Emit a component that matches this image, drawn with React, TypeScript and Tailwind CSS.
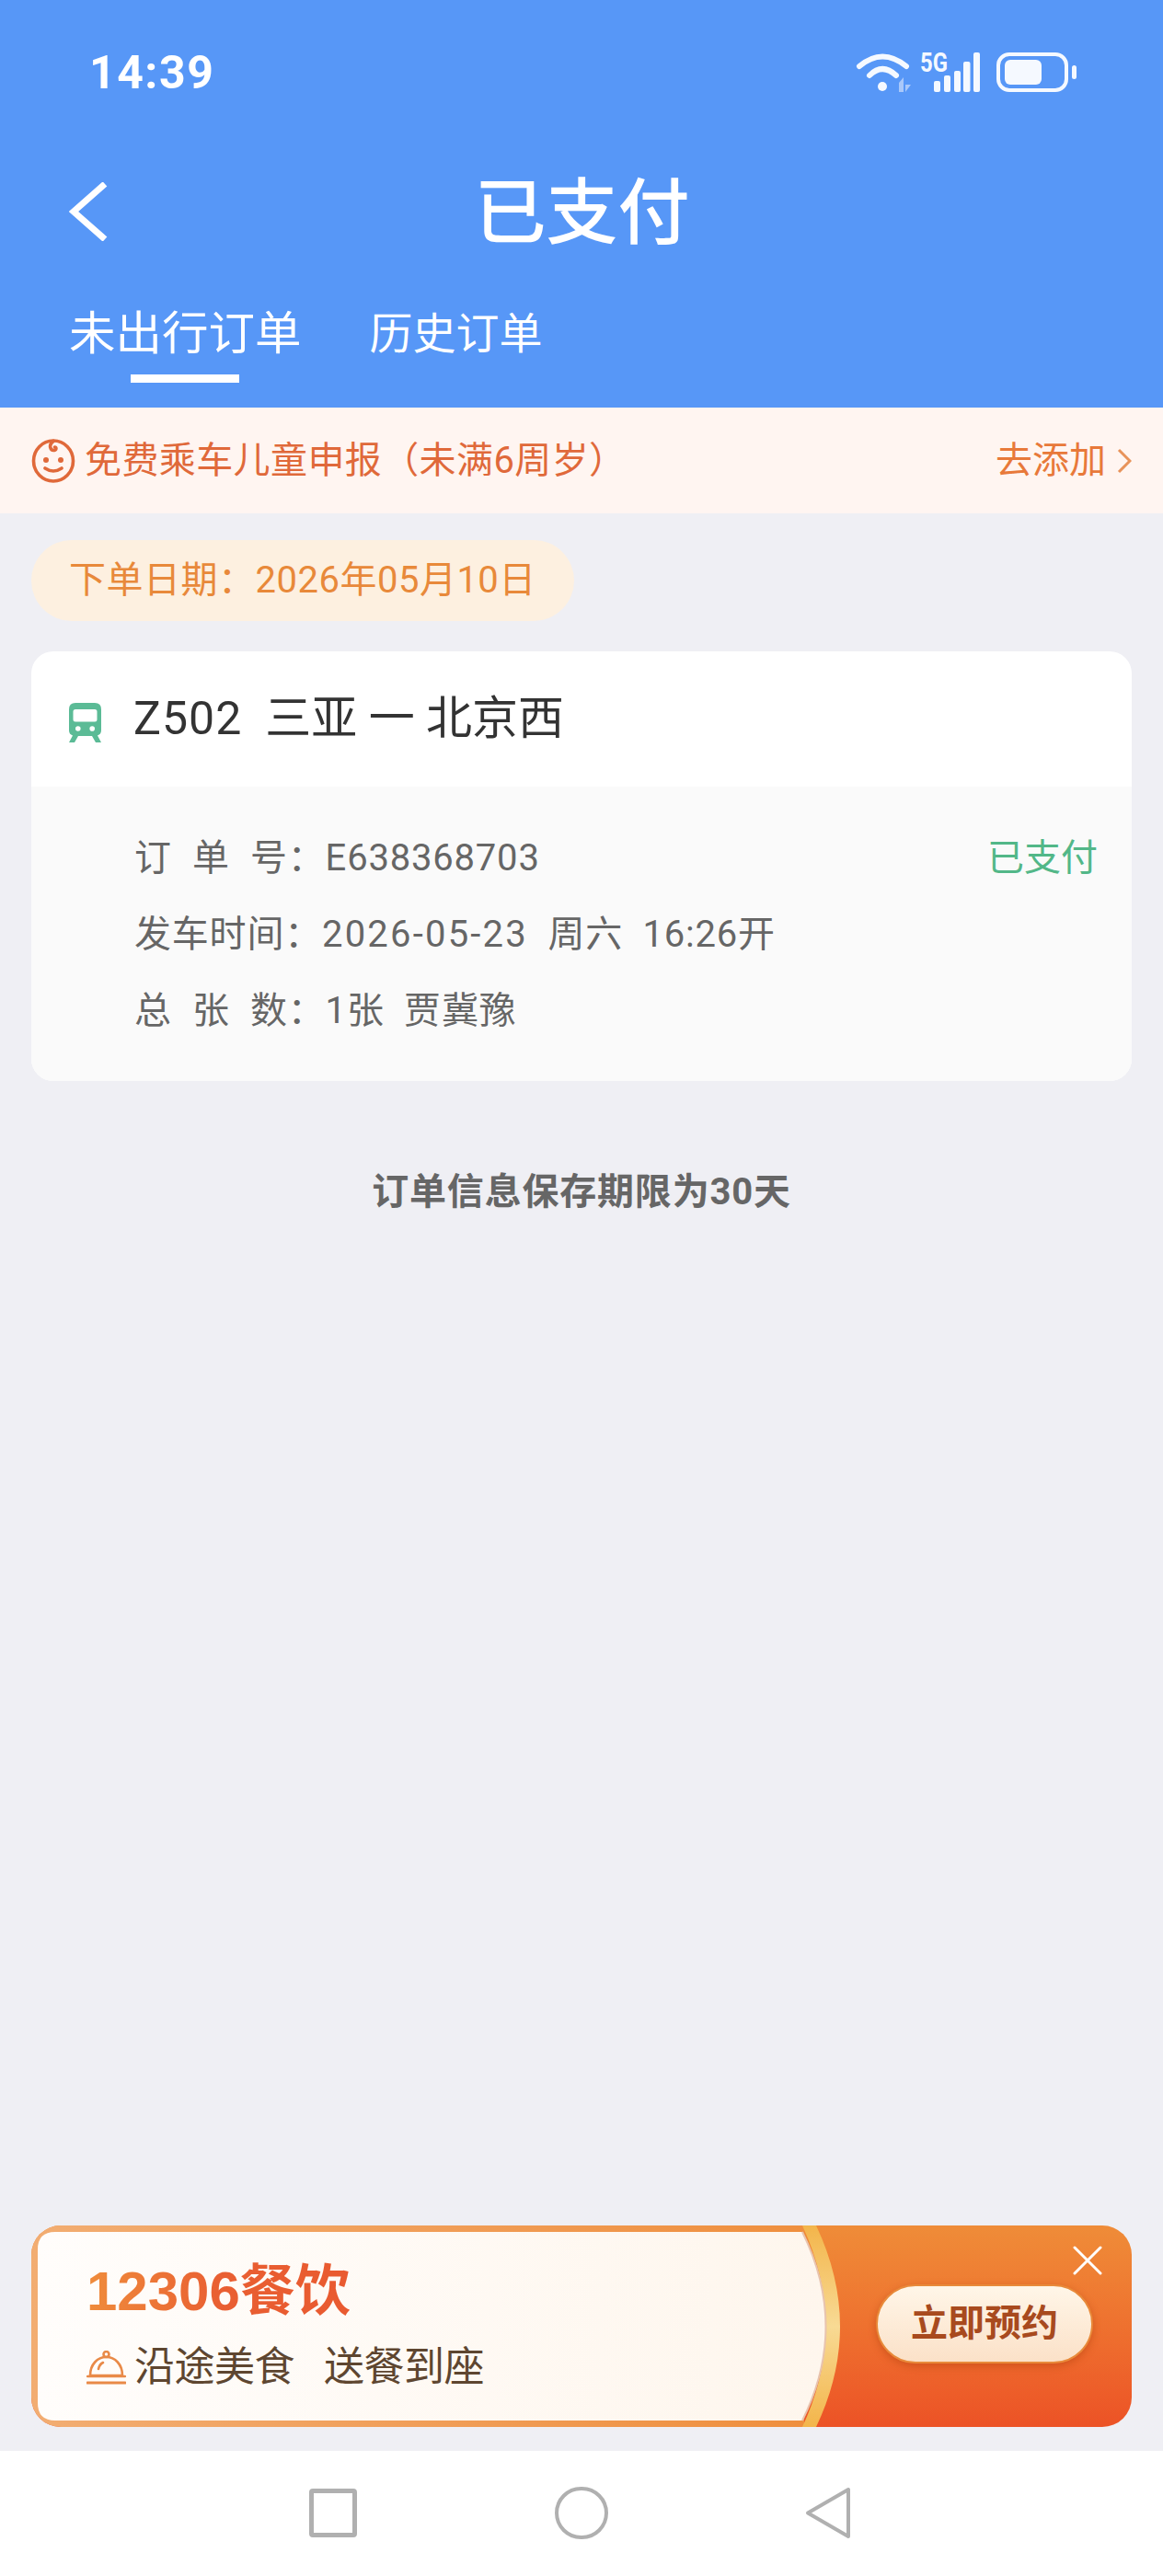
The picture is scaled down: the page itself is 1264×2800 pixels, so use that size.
function StatusIcons() {
  return (
    <svg width="238" height="43" viewBox="0 0 238 43" fill="none" className="overflow-visible">
      <path d="M2 15 Q27 -6 53 15" stroke="#f5f9ff" strokeWidth="6" strokeLinecap="round" />
      <path d="M13 25 Q27 11 42 25" stroke="#f5f9ff" strokeWidth="6" strokeLinecap="round" />
      <circle cx="27" cy="37" r="5" fill="#f5f9ff" />
      <path d="M45 33 L45 43 L50 43 L50 27 Z M52 27 L52 43 L58 35 L52 35 Z" fill="#a9c8fa" />
      <text x="68" y="21" fill="#f5f9ff" fontSize="29" fontWeight="700" textLength="30" lengthAdjust="spacingAndGlyphs">5G</text>
      <rect x="83" y="31" width="7" height="12" rx="2" fill="#f5f9ff" />
      <rect x="94" y="25" width="7" height="18" rx="2" fill="#f5f9ff" />
      <rect x="105" y="20" width="7" height="23" rx="2" fill="#f5f9ff" />
      <rect x="115" y="10" width="7.5" height="33" rx="2" fill="#f5f9ff" />
      <rect x="126" y="0" width="7" height="43" rx="2" fill="#f5f9ff" />
      <rect x="153" y="2" width="74" height="39" rx="12" stroke="#f5f9ff" strokeWidth="4" />
      <rect x="160" y="8" width="40" height="27" rx="6" fill="#f5f9ff" />
      <rect x="233" y="14" width="5" height="15" rx="2.5" fill="#f5f9ff" />
    </svg>
  )
}

function BabyIcon() {
  return (
    <svg width="48" height="48" viewBox="0 0 48 48" fill="none" stroke="#e0693a" strokeWidth="3.6" strokeLinecap="round">
      <ellipse cx="24" cy="24" rx="21.5" ry="22" />
      <path d="M24 2.5 C18 7 21 13 25 12.5 C27.5 12 27.5 9 25.5 9" />
      <circle cx="16" cy="23" r="3" fill="#e0693a" stroke="none" />
      <circle cx="32" cy="23" r="3" fill="#e0693a" stroke="none" />
      <path d="M15 32 Q24 38 33 32" />
    </svg>
  )
}

function TrainIcon() {
  return (
    <svg width="35" height="43" viewBox="0 0 35 43" className="mt-[8px]">
      <path fillRule="evenodd" fill="#5bbb96" d="M7 0 H28 Q35 0 35 7 V30 Q35 34 31 35.5 L35 43 H29 L25 36 H10 L6 43 H0 L4 35.5 Q0 34 0 30 V7 Q0 0 7 0 Z M7 7 Q4.5 7 4.5 9.5 V18 Q4.5 20.5 7 20.5 H28 Q30.5 20.5 30.5 18 V9.5 Q30.5 7 28 7 Z M7 28 a2.8 2.8 0 1 0 5.6 0 a2.8 2.8 0 1 0 -5.6 0 Z M22.4 28 a2.8 2.8 0 1 0 5.6 0 a2.8 2.8 0 1 0 -5.6 0 Z" />
    </svg>
  )
}

function BellIcon() {
  return (
    <svg width="43" height="37" viewBox="0 0 43 37" fill="none" stroke="#e98a48" strokeWidth="2.6" strokeLinecap="round">
      <circle cx="21.5" cy="4" r="3" />
      <path d="M4 27 C4 15 12 7 21.5 7 C31 7 39 15 39 27 Z" />
      <path d="M13 20 Q14 15 18 13" />
      <path d="M1 28 H42" strokeWidth="2.4" />
      <path d="M1 35 H42" strokeWidth="3" />
    </svg>
  )
}

function AdShape() {
  return (
    <svg className="absolute inset-0" width="1196" height="219" viewBox="0 0 1196 219" fill="none">
      <defs>
        <linearGradient id="adBorder" x1="0" y1="0" x2="1" y2="0">
          <stop offset="0" stopColor="#f2ad72" />
          <stop offset="1" stopColor="#ef8f3e" />
        </linearGradient>
        <linearGradient id="adGold" x1="0" y1="0" x2="0" y2="1">
          <stop offset="0" stopColor="#f3b54b" />
          <stop offset="0.5" stopColor="#f8da94" />
          <stop offset="1" stopColor="#f3b54b" />
        </linearGradient>
        <linearGradient id="adFill" x1="0" y1="0" x2="1" y2="0">
          <stop offset="0" stopColor="#fffdfb" />
          <stop offset="1" stopColor="#fef6ed" />
        </linearGradient>
      </defs>
      <path d="M28 0 H840 V219 H28 Q0 219 0 191 V28 Q0 0 28 0 Z" fill="url(#adBorder)" />
      <path d="M838 0 H853 Q905 110 853 219 H838 Q889 110 838 0 Z" fill="url(#adGold)" />
      <path d="M26 7 H838 Q889 110 838 212 H26 Q7 212 7 193 V26 Q7 7 26 7 Z" fill="url(#adFill)" />
      <path d="M838 7 Q889 110 838 212" stroke="#e8c4ae" strokeWidth="2" />
    </svg>
  )
}

function OrderRow({ children, right }: { children: React.ReactNode; right?: string }) {
  return (
    <div className="flex h-[83px] items-center justify-between text-[40px] text-[#666666]">
      <div className="whitespace-pre tracking-[0.8px]">{children}</div>
      {right && <span className="text-[#52b788]">{right}</span>}
    </div>
  )
}

export default function App() {
  return (
    <div className="flex h-[2800px] w-full flex-col bg-[#efeff4] font-['Roboto','Noto_Sans_CJK_SC',sans-serif]">
      <header className="h-[443px] bg-[#5797f7] text-white">
        <div className="flex h-[156px] items-center justify-between pl-[97px] pr-[94px]">
          <span className="translate-y-[1px] text-[50px] font-bold tracking-[1.5px]">14:39</span>
          <StatusIcons />
        </div>
        <div className="grid h-[148px] grid-cols-[1fr_auto_1fr] items-center pl-[75px]">
          <svg width="42" height="64" viewBox="0 0 42 64" fill="none" stroke="white" strokeWidth="7" strokeLinecap="butt">
            <path d="M39 2 L5 32 L39 62" />
          </svg>
          <h1 className="-translate-x-[37px] translate-y-[3px] text-[78px] font-medium leading-none">已支付</h1>
        </div>
        <div className="flex items-start gap-[74px] pl-[75px] pt-[29px]">
          <div className="flex flex-col items-center">
            <span className="text-[50.5px] leading-[60px]">未出行订单</span>
            <div className="mt-[14px] h-[9px] w-[118px] bg-white" />
          </div>
          <span className="text-[47px] leading-[60px]">历史订单</span>
        </div>
      </header>

      <div className="flex h-[115px] items-center justify-between bg-[#fff5f1] px-[34px] text-[40px] text-[#e0693a]">
        <div className="flex items-center gap-[10px]">
          <BabyIcon />
          <span className="tracking-[0.4px]">免费乘车儿童申报（未满6周岁）</span>
        </div>
        <div className="flex items-center gap-[12px] text-[#e8793a]">
          <span>去添加</span>
          <svg width="16" height="28" viewBox="0 0 16 28" fill="none" stroke="#e8935a" strokeWidth="3">
            <path d="M2 2 L14 14 L2 26" />
          </svg>
        </div>
      </div>

      <main className="flex flex-1 flex-col px-[34px]">
        <div className="mt-[29px] flex h-[88px] w-[590px] items-center rounded-full bg-[#fdf0e0] pl-[41px] text-[40px] tracking-[0.5px] text-[#e8893a]">
          下单日期：2026年05月10日
        </div>

        <section className="mt-[33px] overflow-hidden rounded-[24px] bg-white">
          <div className="flex h-[147px] items-center pl-[41px] text-[50px] text-[#333333]">
            <TrainIcon />
            <span className="ml-[35px] tracking-[1px]">Z502</span>
            <span className="ml-[25px]">三亚 一 北京西</span>
          </div>
          <div className="h-[320px] bg-[#fafafa] pl-[112px] pr-[37px] pt-[36px]">
            <OrderRow right="已支付"><span className="tracking-[23px]">订单</span>号：E638368703</OrderRow>
            <OrderRow>发车时间：<span className="tracking-[2.2px]">2026-05-23</span>  周六  16:26开</OrderRow>
            <OrderRow><span className="tracking-[23px]">总张</span>数：1张  贾冀豫</OrderRow>
          </div>
        </section>

        <p className="mt-[93px] text-center text-[40px] font-bold leading-[56px] tracking-[0.8px] text-[#666666]">订单信息保存期限为30天</p>

        <div className="relative mb-[26px] mt-auto h-[219px] overflow-hidden rounded-[32px] bg-gradient-to-b from-[#ef8c38] to-[#ec5226]">
          <AdShape />
          <div className="relative flex h-full items-start justify-between pl-[60px] pr-[32px]">
            <div className="flex flex-col pt-[34px]">
              <span className="w-fit bg-gradient-to-r from-[#ef8c3c] via-[#e95f32] to-[#e95a30] bg-clip-text font-['Liberation_Sans','Noto_Sans_CJK_SC',sans-serif] text-[60px] font-bold leading-[76px] text-transparent">12306餐饮</span>
              <div className="mt-[14px] flex items-center gap-[9px] text-[44px] leading-[60px] text-[#5e4630]">
                <BellIcon />
                <span className="whitespace-pre tracking-[-0.5px]">沿途美食<span className="ml-[32px]">送餐到座</span></span>
              </div>
            </div>
            <div className="flex flex-col items-end">
              <svg className="mt-[22px]" width="32" height="32" viewBox="0 0 32 32" stroke="white" strokeWidth="3" strokeLinecap="round">
                <path d="M2 2 L30 30 M30 2 L2 30" />
              </svg>
              <button className="mr-[10px] mt-[10px] flex h-[86px] w-[236px] items-center justify-center rounded-full border-2 border-[#e88a3a] bg-gradient-to-b from-[#fff6e8] to-[#fbe1c8] text-[40px] font-bold text-[#a84a1e] shadow-[0_3px_8px_rgba(170,60,10,0.45)]">
                立即预约
              </button>
            </div>
          </div>
        </div>
      </main>

      <nav className="flex h-[136px] items-start justify-center bg-white pl-[336px] pr-[339px] pt-[39px]">
        <div className="flex w-full items-center justify-between">
          <div className="h-[53px] w-[52px] rounded-[4px] border-[5px] border-[#b0b0b0]" />
          <div className="h-[57px] w-[58px] rounded-full border-[4px] border-[#b0b0b0]" />
          <svg width="50" height="57" viewBox="0 0 50 57" fill="none" stroke="#b0b0b0" strokeWidth="4" strokeLinejoin="round">
            <path d="M47 3 V54 L3 28.5 Z" />
          </svg>
        </div>
      </nav>
    </div>
  )
}
